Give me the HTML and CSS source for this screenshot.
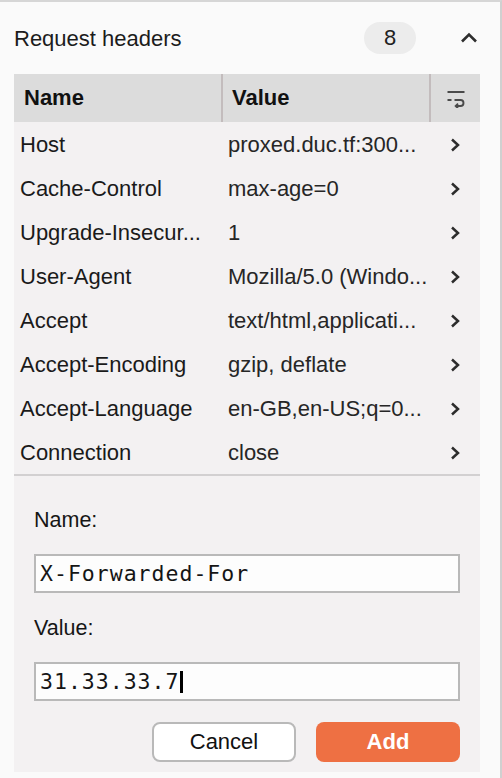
FILE: index.html
```html
<!DOCTYPE html>
<html>
<head>
<meta charset="utf-8">
<link rel="stylesheet" href="styles.css">
</head>
<body>
<div class="page">
  <div class="titlebar">
    <div class="title">Request headers</div>
    <div class="badge">8</div>
    <div class="collapse">
      <svg width="18" height="11" viewBox="0 0 18 11"><polyline points="2,9.5 9,2.5 16,9.5" fill="none" stroke="#2e2e2e" stroke-width="2.6"/></svg>
    </div>
  </div>
  <div class="panel">
    <div class="thead">
      <div class="th th-name">Name</div>
      <div class="th th-value">Value</div>
      <div class="th th-icon">
        <svg width="19" height="18" viewBox="0 0 19 18"><path d="M0.5 2 H17.5 M0.5 10 H4.5 M7.5 10 H13.5 A3 3 0 0 1 13.5 16 H9" fill="none" stroke="#4a4a4a" stroke-width="1.9"/><polyline points="11,13.6 8.6,16 11,18.4" fill="none" stroke="#4a4a4a" stroke-width="1.8"/></svg>
      </div>
    </div>
    <div class="rows">
      <div class="row"><div class="name">Host</div><div class="value">proxed.duc.tf:300...</div><div class="chev"><svg width="10" height="16" viewBox="0 0 10 16"><polyline points="2,2.5 8,8 2,13.5" fill="none" stroke="#2c2c2c" stroke-width="2.5"/></svg></div></div>
      <div class="row"><div class="name">Cache-Control</div><div class="value">max-age=0</div><div class="chev"><svg width="10" height="16" viewBox="0 0 10 16"><polyline points="2,2.5 8,8 2,13.5" fill="none" stroke="#2c2c2c" stroke-width="2.5"/></svg></div></div>
      <div class="row"><div class="name">Upgrade-Insecur...</div><div class="value">1</div><div class="chev"><svg width="10" height="16" viewBox="0 0 10 16"><polyline points="2,2.5 8,8 2,13.5" fill="none" stroke="#2c2c2c" stroke-width="2.5"/></svg></div></div>
      <div class="row"><div class="name">User-Agent</div><div class="value">Mozilla/5.0 (Windo...</div><div class="chev"><svg width="10" height="16" viewBox="0 0 10 16"><polyline points="2,2.5 8,8 2,13.5" fill="none" stroke="#2c2c2c" stroke-width="2.5"/></svg></div></div>
      <div class="row"><div class="name">Accept</div><div class="value">text/html,applicati...</div><div class="chev"><svg width="10" height="16" viewBox="0 0 10 16"><polyline points="2,2.5 8,8 2,13.5" fill="none" stroke="#2c2c2c" stroke-width="2.5"/></svg></div></div>
      <div class="row"><div class="name">Accept-Encoding</div><div class="value">gzip, deflate</div><div class="chev"><svg width="10" height="16" viewBox="0 0 10 16"><polyline points="2,2.5 8,8 2,13.5" fill="none" stroke="#2c2c2c" stroke-width="2.5"/></svg></div></div>
      <div class="row"><div class="name">Accept-Language</div><div class="value">en-GB,en-US;q=0...</div><div class="chev"><svg width="10" height="16" viewBox="0 0 10 16"><polyline points="2,2.5 8,8 2,13.5" fill="none" stroke="#2c2c2c" stroke-width="2.5"/></svg></div></div>
      <div class="row"><div class="name">Connection</div><div class="value">close</div><div class="chev"><svg width="10" height="16" viewBox="0 0 10 16"><polyline points="2,2.5 8,8 2,13.5" fill="none" stroke="#2c2c2c" stroke-width="2.5"/></svg></div></div>
    </div>
    <div class="form">
      <div class="label">Name:</div>
      <div class="field">X-Forwarded-For</div>
      <div class="label">Value:</div>
      <div class="field">31.33.33.7<span class="caret"></span></div>
      <div class="actions">
        <div class="btn btn-cancel">Cancel</div>
        <div class="btn btn-add">Add</div>
      </div>
    </div>
  </div>
</div>
</body>
</html>
```
FILE: styles.css
```css
html, body {
  margin: 0;
  padding: 0;
  background: #fafafa;
}
.page {
  box-sizing: border-box;
  min-height: 778px;
  border-top: 2px solid #d6d6d6;
  border-right: 2px solid #d0d0d0;
  padding-left: 14px;
  font-family: "Liberation Sans", Arial, sans-serif;
  color: #1c1c1c;
}
.titlebar {
  box-sizing: border-box;
  width: 466px;
  height: 72px;
  padding-top: 2px;
  display: flex;
  align-items: center;
}
.title {
  flex: 1;
  font-size: 22px;
}
.badge {
  width: 52px;
  height: 32px;
  border-radius: 16px;
  background: #ececec;
  font-size: 22px;
  line-height: 32px;
  text-align: center;
  color: #222;
  margin-top: -2px;
}
.collapse {
  width: 64px;
  display: flex;
  justify-content: flex-end;
  padding-right: 2px;
  box-sizing: border-box;
  margin-top: -4px;
}
.collapse svg { display: block; }
.panel {
  width: 466px;
  background: #f3f1f2;
}
.thead {
  display: grid;
  grid-template-columns: 207px 208px 51px;
  height: 48px;
  background: #dcdcdc;
}
.th {
  display: flex;
  align-items: center;
  font-size: 22px;
  font-weight: bold;
  color: #111;
}
.th-name { padding-left: 10px; }
.th-value {
  border-left: 2px solid #c3bcbd;
  padding-left: 9px;
}
.th-icon {
  border-left: 2px solid #c3bcbd;
  justify-content: center;
  padding-left: 2px;
}
.th-icon svg { display: block; margin-top: 2px; }
.rows {
  border-bottom: 2px solid #d2d0d1;
}
.row {
  box-sizing: border-box;
  display: grid;
  grid-template-columns: 207px 214px 45px;
  height: 44px;
  padding-top: 2px;
  align-items: center;
  font-size: 22px;
}
.name {
  padding-left: 6px;
  white-space: nowrap;
  overflow: hidden;
  color: #1a1a1a;
}
.value {
  padding-left: 7px;
  white-space: nowrap;
  overflow: hidden;
  color: #262626;
}
.chev {
  padding-left: 15px;
  display: flex;
  align-items: center;
}
.chev svg { display: block; }
.form {
  padding: 31px 20px 10px 20px;
  display: flex;
  flex-direction: column;
}
.label {
  font-size: 21.5px;
  line-height: 26px;
  color: #161616;
}
.field {
  box-sizing: border-box;
  height: 39px;
  margin-top: 21px;
  margin-bottom: 22px;
  border: 2px solid #b9b9b9;
  background: #fdfdfd;
  padding-left: 4px;
  font-family: "DejaVu Sans Mono", monospace;
  font-size: 21.5px;
  letter-spacing: 1px;
  line-height: 35px;
  color: #151515;
  display: flex;
  align-items: center;
}
.field + .actions { margin-top: -1px; }
.caret {
  display: inline-block;
  width: 3px;
  height: 22px;
  background: #000;
  margin-left: 1px;
}
.actions {
  display: flex;
  justify-content: flex-end;
  gap: 20px;
}
.btn {
  box-sizing: border-box;
  width: 144px;
  height: 40px;
  border-radius: 8px;
  display: flex;
  align-items: center;
  justify-content: center;
  font-size: 22px;
}
.btn-cancel {
  background: #ffffff;
  border: 2px solid #b9b9b9;
  color: #111;
}
.btn-add {
  background: #ee7043;
  color: #ffffff;
  font-weight: bold;
}
```
